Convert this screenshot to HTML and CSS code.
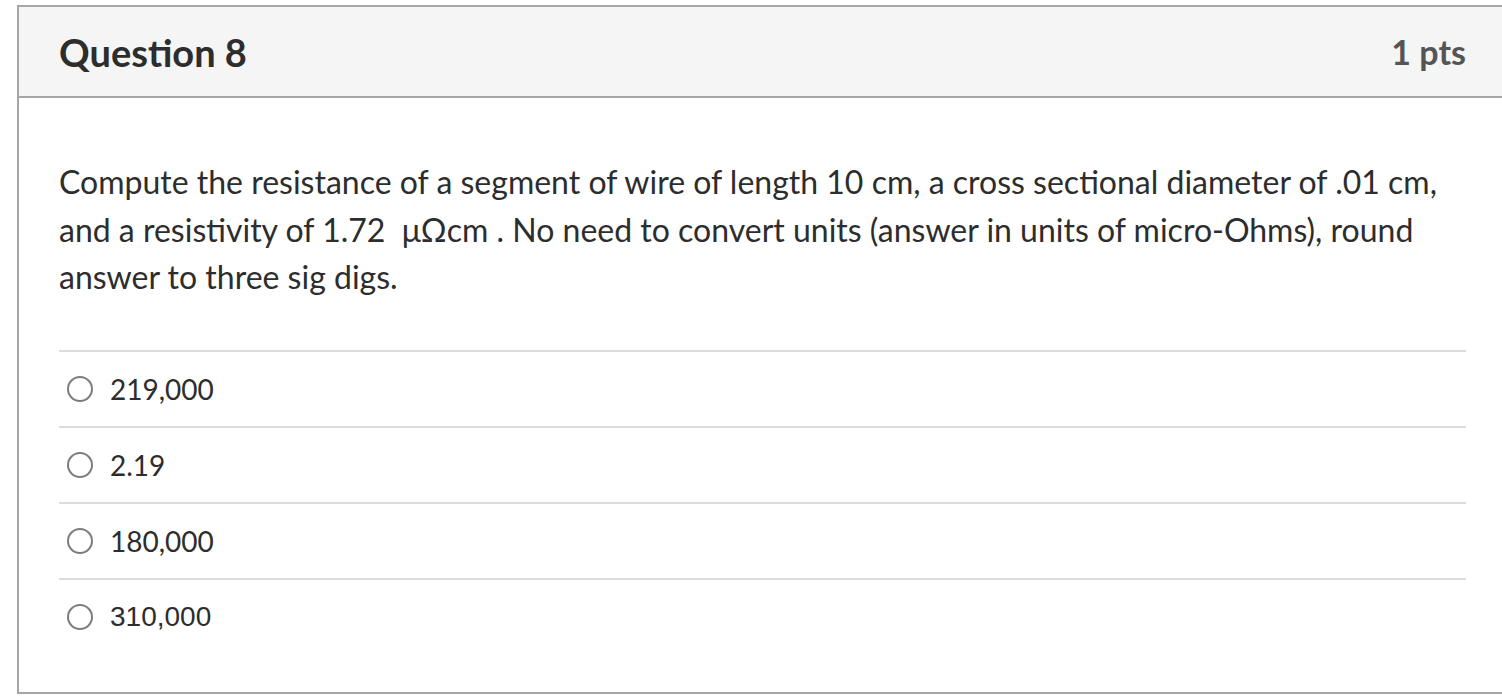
FILE: index.html
```html
<!DOCTYPE html>
<html>
<head>
<meta charset="utf-8">
<link rel="stylesheet" href="styles.css">
</head>
<body>
<div class="question">
  <div class="header">
    <h2 class="title">Question 8</h2>
    <span class="pts">1 pts</span>
  </div>
  <div class="content">
    <p class="text">Compute the resistance of a segment of wire of length 10 cm, a cross sectional diameter of .01 cm, and a resistivity of 1.72 &nbsp;μΩcm . No need to convert units (answer in units of micro-Ohms), round answer to three sig digs.</p>
    <div class="answers">
      <label class="answer"><span class="radio"></span><span class="label">219,000</span></label>
      <label class="answer"><span class="radio"></span><span class="label">2.19</span></label>
      <label class="answer"><span class="radio"></span><span class="label">180,000</span></label>
      <label class="answer"><span class="radio"></span><span class="label alt">310,000</span></label>
    </div>
  </div>
</div>
</body>
</html>
```

FILE: styles.css
```css
html, body {
  margin: 0;
  padding: 0;
  background: #ffffff;
}
body {
  font-family: Lato, "Open Sans", sans-serif;
  color: #2d2d2d;
  overflow: hidden;
}
.question {
  margin: 5px 0 0 17px;
  width: 1491px;
  height: 689px;
  box-sizing: border-box;
  border: 2px solid #a6a6a6;
}
.header {
  height: 89px;
  background: #f5f5f5;
  border-bottom: 2px solid #a6a6a6;
  display: flex;
  align-items: center;
  justify-content: space-between;
  padding: 0 40px;
}
.title {
  margin: 0;
  font-size: 38px;
  font-weight: 700;
  color: #2d2d2d;
}
.pts {
  font-size: 34px;
  font-weight: 700;
  color: #555555;
}
.content {
  padding: 60px 40px 0 40px;
}
.text {
  margin: 0;
  font-size: 32px;
  line-height: 47.5px;
}
.answers {
  margin-top: 49px;
}
.answer {
  display: flex;
  align-items: center;
  height: 74px;
  border-top: 2px solid #dcdcdc;
}
.radio {
  width: 22px;
  height: 22px;
  border: 2px solid #7d7d7d;
  border-radius: 50%;
  margin-left: 8px;
  margin-right: 17px;
  flex: none;
}
.label {
  font-size: 28px;
}
.label.alt {
  font-family: "Liberation Sans", Arial, sans-serif;
  font-size: 28px;
}
```
